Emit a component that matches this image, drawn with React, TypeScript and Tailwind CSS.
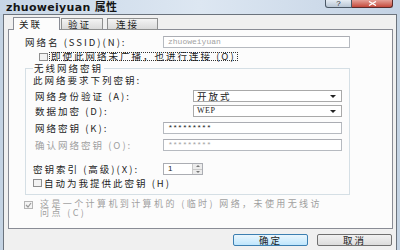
function Checkbox({ checked = false, disabled = false }: { checked?: boolean; disabled?: boolean }) {
  return (
    <div
      className={`flex h-[8px] w-[9px] flex-none items-center justify-center border ${
        disabled ? "border-[#b5b5b5] bg-[#f4f4f4]" : "border-[#8f8f8f] bg-[#f3f3f3]"
      }`}
    >
      {checked && (
        <svg width="7" height="6" viewBox="0 0 7 6">
          <path d="M1 3 L3 5 L6 1" fill="none" stroke={disabled ? "#9a9a9a" : "#333"} strokeWidth="1.2" />
        </svg>
      )}
    </div>
  );
}

function Arrow() {
  return (
    <svg width="6" height="3" viewBox="0 0 6 3">
      <path d="M0 0 H6 L3 3 Z" fill="#222" />
    </svg>
  );
}

function TextBox({ value, width, muted = false }: { value: string; width: string; muted?: boolean }) {
  return (
    <div
      className={`flex h-[12px] items-center border border-[#b6bac0] border-t-[#abadb3] bg-white pl-[4px] font-['Liberation_Mono',monospace] text-[8px] tracking-[0px] ${width} ${
        muted ? "text-[#a3a3a3]" : "text-[#222]"
      }`}
    >
      {value}
    </div>
  );
}

export default function App() {
  return (
    <div className="flex h-[250px] w-[400px] flex-col overflow-hidden bg-[#c4d3e3] font-['Noto_Sans_CJK_SC','Noto_Sans',sans-serif] text-[9.5px] leading-[10px] tracking-[2px] text-[#1c1c1c]">
      {/* title bar */}
      <div className="flex h-[14px] flex-none items-start justify-between bg-gradient-to-r from-[#c7d6e7] via-[#dde7f2] to-[#c3d2e4]">
        <div className="mt-[2px] pl-[6px] font-['DejaVu_Sans','Noto_Sans_CJK_SC',sans-serif] text-[11px] font-bold leading-[11px] tracking-[0.3px] text-[#151515]">
          zhuoweiyuan 属性
        </div>
        <div className="mr-[7px] flex">
          <div className="flex h-[8px] w-[27px] items-center justify-center rounded-bl-[3px] border border-t-0 border-[#4b5866] bg-gradient-to-b from-[#e5ecf4] to-[#b9c6d4] font-['Liberation_Sans',sans-serif] text-[8px] leading-[8px] tracking-[0px] text-[#333]">
            ?
          </div>
          <div className="flex h-[8px] w-[41px] items-center justify-center rounded-br-[3px] border border-l-0 border-t-0 border-[#5a2a2a] bg-gradient-to-b from-[#e4a098] to-[#c4483c]">
            <svg width="9" height="5" viewBox="0 0 9 5">
              <path d="M1 0.5 L8 4.5 M8 0.5 L1 4.5" stroke="#fff" strokeWidth="1.3" />
            </svg>
          </div>
        </div>
      </div>

      {/* window body */}
      <div className="mx-[3px] flex flex-1 flex-col border-x border-t border-[#6b737d] bg-[#f0f0f0] pl-[4px] pr-[3px]">
        {/* tabs */}
        <div className="relative z-10 -mb-px mt-[2px] flex h-[13px] items-end pl-[5px]">
          <div className="flex h-[13px] w-[47px] items-center border border-b-0 border-[#898c95] bg-[#fcfcfc] pl-[5px]">
            关联
          </div>
          <div className="ml-[1px] flex h-[12px] w-[42px] items-center border border-[#8e8f8f] bg-gradient-to-b from-[#f4f4f4] to-[#dadada] pl-[6px]">
            验证
          </div>
          <div className="ml-[4px] flex h-[12px] w-[51px] items-center border border-[#8e8f8f] bg-gradient-to-b from-[#f4f4f4] to-[#dadada] pl-[8px]">
            连接
          </div>
        </div>

        {/* panel */}
        <div className="flex h-[200px] flex-none flex-col border border-[#898c95] bg-[#fcfcfc]">
          <div className="ml-[16px] mt-[6px] flex h-[12px] items-center">
            <span className="w-[138px]">网络名 (SSID)(N):</span>
            <TextBox value="zhuoweiyuan" width="w-[187px]" muted />
          </div>

          <div className="ml-[30px] mt-[4px] flex h-[9px] items-center">
            <Checkbox />
            <span className="ml-[1px] border border-dotted border-[#333] px-[1px] leading-[7px]">即使此网络未广播，也进行连接 (O)</span>
          </div>

          <fieldset className="ml-[16px] mt-[2px] w-[324px] border border-[#d5dfe5] px-[7px] pb-[7px]">
            <legend className="px-[1px] leading-[10px]">无线网络密钥</legend>
            <div className="mt-[2px] h-[10px]">此网络要求下列密钥:</div>

            <div className="ml-[2px] mt-[5px] flex h-[12px] items-center">
              <span className="w-[158px]">网络身份验证 (A):</span>
              <div className="flex h-[12px] w-[149px] items-center justify-between border border-[#a9a9a9] bg-white pl-[3px] pr-[5px]">
                <span>开放式</span>
                <Arrow />
              </div>
            </div>
            <div className="ml-[2px] mt-[3px] flex h-[12px] items-center">
              <span className="w-[158px]">数据加密 (D):</span>
              <div className="flex h-[12px] w-[149px] items-center justify-between border border-[#a9a9a9] bg-white pl-[3px] pr-[5px] font-['Liberation_Serif',serif] text-[8px] tracking-[0.5px]">
                <span>WEP</span>
                <Arrow />
              </div>
            </div>

            <div className="ml-[2px] mt-[5px] flex h-[12px] items-center">
              <span className="w-[128px]">网络密钥 (K):</span>
              <TextBox value="*********" width="w-[179px]" />
            </div>
            <div className="ml-[2px] mt-[5px] flex h-[12px] items-center">
              <span className="w-[128px] text-[#a0a0a0]">确认网络密钥 (O):</span>
              <TextBox value="*********" width="w-[179px]" muted />
            </div>

            <div className="mt-[12px] flex h-[12px] items-center">
              <span className="w-[130px]">密钥索引 (高级)(X):</span>
              <div className="flex h-[12px] w-[40px] items-center justify-between border border-[#abadb3] bg-white pl-[4px] font-['Liberation_Sans',sans-serif] text-[8px] tracking-[0px]">
                <span>1</span>
                <div className="flex h-full w-[10px] flex-col border-l border-[#c8c8c8] bg-[#ececec]">
                  <div className="flex flex-1 items-center justify-center border-b border-[#c8c8c8]">
                    <svg width="4" height="2" viewBox="0 0 4 2">
                      <path d="M0 2 L2 0 L4 2 Z" fill="#777" />
                    </svg>
                  </div>
                  <div className="flex flex-1 items-center justify-center">
                    <svg width="4" height="2" viewBox="0 0 4 2">
                      <path d="M0 0 L4 0 L2 2 Z" fill="#777" />
                    </svg>
                  </div>
                </div>
              </div>
            </div>

            <div className="mt-[3px] flex h-[9px] items-center">
              <Checkbox />
              <span className="ml-[2px]">自动为我提供此密钥 (H)</span>
            </div>
          </fieldset>

          <div className="ml-[15px] mt-[4px] flex items-start text-[#a0a0a0]">
            <div className="mt-[2px]">
              <Checkbox checked disabled />
            </div>
            <div className="ml-[7px] text-[9px] leading-[9px] tracking-[2.4px]">
              这是一个计算机到计算机的 (临时) 网络，未使用无线访
              <br />
              问点 (C)
            </div>
          </div>
        </div>

        {/* buttons */}
        <div className="mr-[1px] mt-[5px] flex justify-end gap-[9px]">
          <div className="flex h-[12px] w-[75px] items-center justify-center rounded-[2px] border border-[#3c7fb1] bg-gradient-to-b from-[#eaf6fd] to-[#bee6fd]">
            确定
          </div>
          <div className="flex h-[12px] w-[75px] items-center justify-center rounded-[2px] border border-[#707070] bg-gradient-to-b from-[#f2f2f2] to-[#dcdcdc]">
            取消
          </div>
        </div>
      </div>
    </div>
  );
}
